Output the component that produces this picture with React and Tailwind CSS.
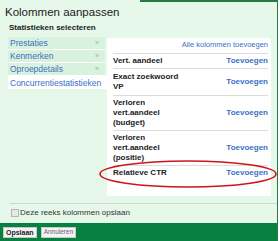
import React from "react";

const NAV = ["Prestaties", "Kenmerken", "Oproepdetails"];

const ROWS = [
  ["Vert. aandeel"],
  ["Exact zoekwoord", "VP"],
  ["Verloren", "vert.aandeel", "(budget)"],
  ["Verloren", "vert.aandeel", "(positie)"],
  ["Relatieve CTR"],
];

export default function App() {
  return (
    <div className="relative w-[280px] h-[241px] overflow-hidden bg-white font-['Liberation_Sans',Arial,sans-serif]">
      <div className="relative w-[278px] h-[241px] bg-[#e5f8ea] border-r border-[#2a7a3e]">
        {/* top border, only on the right half */}
        <div className="flex h-[2px]">
          <div className="w-[140px]" />
          <div className="flex-1 bg-[#2a7a3e]" />
        </div>

        {/* title */}
        <div className="h-[19px] pl-[5px] pt-[3px] text-[11.5px] leading-[14px] text-[#222]">Kolommen aanpassen</div>
        <div className="pl-[9px] pt-[2px] h-[16px] text-[8px] leading-[10px] font-bold text-[#222]">Statistieken selecteren</div>

        <div className="flex pl-[8px] gap-[2px]">
          {/* left nav */}
          <div className="w-[97px] flex flex-col">
            {NAV.map((n) => (
              <div key={n} className="flex items-center justify-between h-[13px] border-b border-white bg-[#d9f2de] pl-[2px] pr-[6px] text-[8.5px] leading-[10px] text-[#3a6fc6]">
                <span>{n}</span>
                <span className="text-[#9bb0a0] text-[7px]">»</span>
              </div>
            ))}
            <div className="w-[99px] h-[13px] bg-white pl-[2px] text-[8.5px] leading-[10px] text-[#3a6fc6] flex items-center whitespace-nowrap">
              Concurrentiestatistieken
            </div>
          </div>

          {/* right panel */}
          <div className="w-[164px] h-[158px] mt-[1px] bg-white pl-[6px] pr-[3px] pt-[2px]">
            <div className="pb-[3px] text-right text-[7.5px] leading-[10px] text-[#3a6fc6] border-b border-[#dcdcdc]">
              Alle kolommen toevoegen
            </div>
            {ROWS.map((r, i) => (
              <div
                key={i}
                className={`flex items-center justify-between py-[2px] text-[8px] leading-[10px] ${i === 1 ? "pt-[3px] pb-[3px]" : ""} ${i < ROWS.length - 1 ? "border-b border-[#dcdcdc]" : ""}`}
              >
                <div className="font-bold text-[#222]">
                  {r.map((l) => (
                    <div key={l}>{l}</div>
                  ))}
                </div>
                <span className="font-bold text-[#3a6fc6]">Toevoegen</span>
              </div>
            ))}
          </div>
        </div>

        <div className="ml-[10px] mt-[7px] border-t border-[#cdd9ce]" />
        <div className="flex items-center gap-[1px] pl-[11px] h-[18px] text-[8px] text-[#333]">
          <span className="w-[8px] h-[8px] border border-[#b5b5b5] bg-[#e8e8e8]" />
          <span>Deze reeks kolommen opslaan</span>
        </div>

        <div className="absolute left-0 right-0 bottom-0 h-[18px] bg-[#078040] flex items-center gap-[4px] px-[3px]">
          <button className="h-[11px] px-[2px] bg-[#f4f4f4] border border-[#c8c8c8] text-[7px] font-bold text-[#222] leading-none">Opslaan</button>
          <button className="h-[11px] px-[2px] bg-[#f4f4f4] border border-[#c8c8c8] text-[6.5px] text-[#666] leading-none">Annuleren</button>
        </div>
      </div>

      <svg className="absolute left-0 top-0 pointer-events-none" width="280" height="241">
        <ellipse cx="188" cy="174" rx="88" ry="13" fill="none" stroke="#d0141e" strokeWidth="1.6" />
      </svg>
    </div>
  );
}
